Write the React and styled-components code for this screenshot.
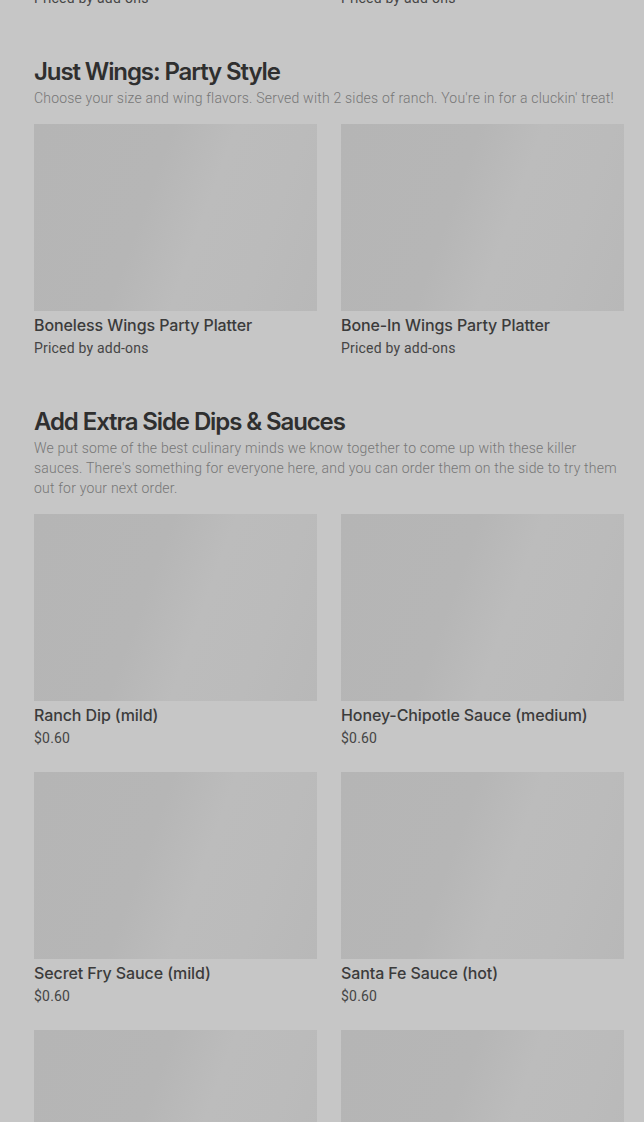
import React from "react";
import styled, { createGlobalStyle } from "styled-components";

const Global = createGlobalStyle`
  html, body { margin: 0; padding: 0; background: #c6c6c6; overflow: hidden; }
  body { font-family: Inter, "Noto Sans", sans-serif; }
`;

const Page = styled.main`
  padding: 0 20px 0 34px;
  margin-top: -15px;
  display: flex;
  flex-direction: column;
  gap: 48px;
`;

const Section = styled.section`
  display: flex;
  flex-direction: column;
`;

const Heading = styled.h2`
  margin: 0;
  font-family: Inter, sans-serif;
  font-weight: 600;
  font-size: 24px;
  line-height: 32px;
  letter-spacing: -1.1px;
  color: #2f2f2f;
`;

const Desc = styled.p`
  margin: 0 0 16px;
  font-family: Roboto, sans-serif;
  font-weight: 300;
  font-size: 14px;
  line-height: 20px;
  letter-spacing: 0.2px;
  color: #767676;
`;

const Grid = styled.div`
  display: grid;
  grid-template-columns: 1fr 1fr;
  column-gap: 24px;
  row-gap: 24px;
`;

const Item = styled.div`
  display: flex;
  flex-direction: column;
`;

const Thumb = styled.div`
  height: 187px;
  background: linear-gradient(110deg, #b5b5b5 0%, #b6b6b6 40%, #bcbcbc 58%, #bbbbbb 78%, #b8b8b8 100%);
`;

const Title = styled.div`
  margin-top: 4px;
  font-family: Inter, sans-serif;
  font-weight: 500;
  font-size: 16px;
  line-height: 20px;
  letter-spacing: -0.1px;
  color: #3b3b3b;
`;

const Price = styled.div`
  margin-top: 3px;
  font-family: Roboto, sans-serif;
  font-weight: 400;
  font-size: 14px;
  line-height: 20px;
  letter-spacing: 0.2px;
  color: #454545;
`;

const sections = [
  {
    title: "Just Wings: Party Style",
    desc: "Choose your size and wing flavors. Served with 2 sides of ranch. You're in for a cluckin' treat!",
    items: [
      ["Boneless Wings Party Platter", "Priced by add-ons"],
      ["Bone-In Wings Party Platter", "Priced by add-ons"],
    ],
  },
  {
    title: "Add Extra Side Dips & Sauces",
    desc: "We put some of the best culinary minds we know together to come up with these killer sauces. There's something for everyone here, and you can order them on the side to try them out for your next order.",
    items: [
      ["Ranch Dip (mild)", "$0.60"],
      ["Honey-Chipotle Sauce (medium)", "$0.60"],
      ["Secret Fry Sauce (mild)", "$0.60"],
      ["Santa Fe Sauce (hot)", "$0.60"],
      ["", ""],
      ["", ""],
    ],
  },
];

export default function App() {
  return (
    <>
      <Global />
      <Page>
        <Grid>
          <Price>Priced by add-ons</Price>
          <Price>Priced by add-ons</Price>
        </Grid>
        {sections.map((s) => (
          <Section key={s.title}>
            <Heading>{s.title}</Heading>
            <Desc>{s.desc}</Desc>
            <Grid>
              {s.items.map(([t, p], i) => (
                <Item key={i}>
                  <Thumb />
                  {t && <Title>{t}</Title>}
                  {p && <Price>{p}</Price>}
                </Item>
              ))}
            </Grid>
          </Section>
        ))}
      </Page>
    </>
  );
}
